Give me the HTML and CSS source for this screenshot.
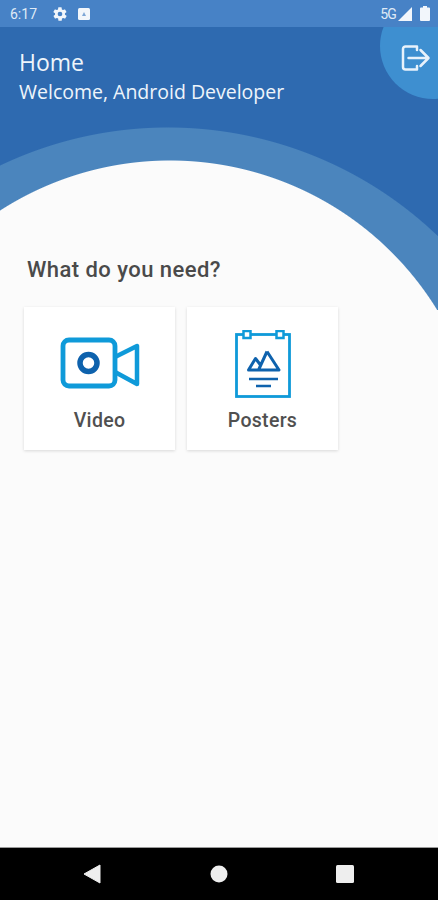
FILE: index.html
```html
<!DOCTYPE html>
<html lang="en">
<head>
    <meta charset="UTF-8">
    <meta name="viewport" content="width=device-width, initial-scale=1.0">
    <title>Home</title>
    <link rel="stylesheet" href="styles.css">
</head>
<body>
    <div class="app">
        <!-- Android status bar -->
        <div class="status-bar">
            <div class="status-left">
                <span class="status-time">6:17</span>
                <svg class="status-gear" width="16" height="16" viewBox="0 0 24 24"><path fill="#f2f6fb" d="M19.4 13a7.500 7.500 0 0 0 0-2l2.100-1.600a.5.5 0 0 0 .1-.6l-2-3.500a.5.5 0 0 0-.6-.2l-2.500 1a7.300 7.300 0 0 0-1.700-1l-.4-2.700a.5.5 0 0 0-.5-.4h-4a.5.5 0 0 0-.5.4l-.4 2.700a7.300 7.300 0 0 0-1.700 1l-2.500-1a.5.5 0 0 0-.6.2l-2 3.500a.5.5 0 0 0 .1.600L4.600 11a7.500 7.500 0 0 0 0 2l-2.100 1.600a.5.5 0 0 0-.1.600l2 3.500a.5.5 0 0 0 .6.200l2.500-1a7.300 7.300 0 0 0 1.700 1l.4 2.700a.5.500 0 0 0 .5.400h4a.5.500 0 0 0 .5-.4l.4-2.700a7.300 7.300 0 0 0 1.700-1l2.500 1a.5.500 0 0 0 .6-.2l2-3.500a.5.5 0 0 0-.1-.6zM12 15.500a3.500 3.500 0 1 1 0-7 3.500 3.500 0 0 1 0 7z"/></svg>
                <svg class="status-badge" width="12" height="12" viewBox="0 0 12 12"><rect width="12" height="12" rx="1.500" fill="#f2f6fb"/><path d="M6 4 8 8H4z" fill="#7ea6d6"/></svg>
            </div>
            <div class="status-right">
                <span class="status-net">5G</span>
                <svg width="14" height="14" viewBox="0 0 15 15"><path d="M15 0v15H0z" fill="#f2f6fb"/></svg>
                <svg class="status-battery" width="10" height="15" viewBox="0 0 10 15"><path d="M3 0h4v1.500h2a1 1 0 0 1 1 1V14a1 1 0 0 1-1 1H1a1 1 0 0 1-1-1V2.500a1 1 0 0 1 1-1h2z" fill="#f2f6fb"/></svg>
            </div>
        </div>

        <header class="top">
            <h1 class="top-title">Home</h1>
            <p class="top-welcome">Welcome, Android Developer</p>
            <div class="logout">
                <svg width="32" height="32" viewBox="0 0 32 32" fill="none" stroke="#e8f2fb" stroke-width="2.500" stroke-linecap="round" stroke-linejoin="round">
                    <path d="M18 8V4.500H6.500a2.500 2.500 0 0 0-2.500 2.500v18a2.500 2.500 0 0 0 2.500 2.500H18V24"/>
                    <path d="M9.500 16H29M21.500 8l8 8-8 8"/>
                </svg>
            </div>
        </header>

        <main class="content">
            <h2 class="question">What do you need?</h2>
            <div class="cards">
                <div class="card">
                    <svg class="card-icon" width="80" height="70" viewBox="0 0 80 70" fill="none">
                        <rect x="3" y="10" width="52" height="46" rx="6" stroke="#0f9ad9" stroke-width="4.800"/>
                        <path d="M55 27 77 16v38L55 42" stroke="#0f9ad9" stroke-width="4.500" stroke-linejoin="round"/>
                        <circle cx="28.500" cy="33" r="8.500" stroke="#0e62ad" stroke-width="5.500"/>
                    </svg>
                    <span class="card-label">Video</span>
                </div>
                <div class="card">
                    <svg class="card-icon" width="80" height="70" viewBox="0 0 80 70" fill="none">
                        <rect x="13.500" y="4.500" width="53" height="62" stroke="#0f9ad9" stroke-width="2.800"/>
                        <rect x="20.500" y="1" width="7" height="7" fill="#fff" stroke="#0f9ad9" stroke-width="2.500"/>
                        <rect x="53.500" y="1" width="7" height="7" fill="#fff" stroke="#0f9ad9" stroke-width="2.500"/>
                        <path d="M44 21.500 56 40H25.500L32.500 28.500 37.500 35M35.500 40 44 21.500" stroke="#0e62ad" stroke-width="3" stroke-linejoin="round"/>
                        <path d="M26 49H55M33 56H48" stroke="#0e62ad" stroke-width="2.500"/>
                    </svg>
                    <span class="card-label">Posters</span>
                </div>
            </div>
        </main>

        <!-- Android nav bar -->
        <nav class="nav-bar">
            <svg width="18" height="20" viewBox="0 0 18 20"><path d="M17 1v18L1 10z" fill="#eee" stroke="#eee" stroke-linejoin="round"/></svg>
            <svg width="18" height="18" viewBox="0 0 18 18"><circle cx="9" cy="9" r="8.500" fill="#eee"/></svg>
            <svg width="18" height="18" viewBox="0 0 18 18"><rect width="18" height="18" rx="1.500" fill="#eee"/></svg>
        </nav>
    </div>
</body>
</html>
```

FILE: styles.css
```css
body {
    margin: 0;
    font-family: "Roboto", Arial, sans-serif;
}
.app {
    height: 900px;
    overflow: hidden;
    display: flex;
    flex-direction: column;
    background:
        linear-gradient(transparent 0, transparent 310px, #fbfbfb 310px),
        radial-gradient(circle 314px at 170px 474px, #fbfbfb 313px, transparent 314px),
        radial-gradient(circle 390px at 168px 517px, #4b85bd 389px, transparent 390px),
        #2e6ab0;
}

/* Status bar */
.status-bar {
    height: 27px;
    flex-shrink: 0;
    display: flex;
    align-items: center;
    justify-content: space-between;
    padding: 0 8px 0 10px;
    background-color: #4782c6;
    color: #dfeaf6;
    position: relative;
    z-index: 2;
}
.status-left, .status-right {
    display: flex;
    align-items: center;
}
.status-time {
    font-size: 14px;
    width: 42px;
}
.status-badge {
    margin-left: 10px;
}
.status-net {
    font-size: 14px;
    letter-spacing: -0.8px;
    margin-right: 2px;
}
.status-battery {
    margin-left: 8px;
}

/* Header */
.top {
    position: relative;
    padding: 21px 19px 0;
    color: #eef5fb;
    font-family: "Open Sans", sans-serif;
}
.top-title {
    margin: 0;
    font-size: 23px;
    font-weight: 400;
    line-height: 29px;
}
.top-welcome {
    margin: 0;
    font-size: 19.500px;
    line-height: 29px;
}
.logout {
    position: absolute;
    top: -34px;
    right: -48px;
    width: 106px;
    height: 106px;
    border-radius: 50%;
    background-color: #3e8fd0;
}
.logout svg {
    position: absolute;
    left: 19px;
    top: 49px;
}

/* Main */
.content {
    flex: 1;
    padding: 0 24px;
}
.question {
    margin: 150px 0 0 3px;
    font-size: 22px;
    font-weight: 500;
    letter-spacing: 0.45px;
    line-height: 28px;
    color: #4a4a4a;
}
.cards {
    display: flex;
    gap: 12px;
    margin-top: 23px;
}
.card {
    width: 151px;
    height: 143px;
    box-sizing: border-box;
    padding-top: 23px;
    display: flex;
    flex-direction: column;
    align-items: center;
    background-color: #fff;
    box-shadow: 0 1px 3px rgba(0, 0, 0, 0.14);
}
.card-label {
    margin-top: 9px;
    font-size: 19.500px;
    font-weight: 500;
    letter-spacing: 0.3px;
    line-height: 24px;
    color: #505050;
}

/* Nav bar */
.nav-bar {
    height: 53px;
    flex-shrink: 0;
    box-sizing: border-box;
    border-top: 1px solid #9a9a9a;
    background-color: #000;
    display: flex;
    align-items: center;
    justify-content: space-between;
    padding: 0 84px 0 83px;
}
```
